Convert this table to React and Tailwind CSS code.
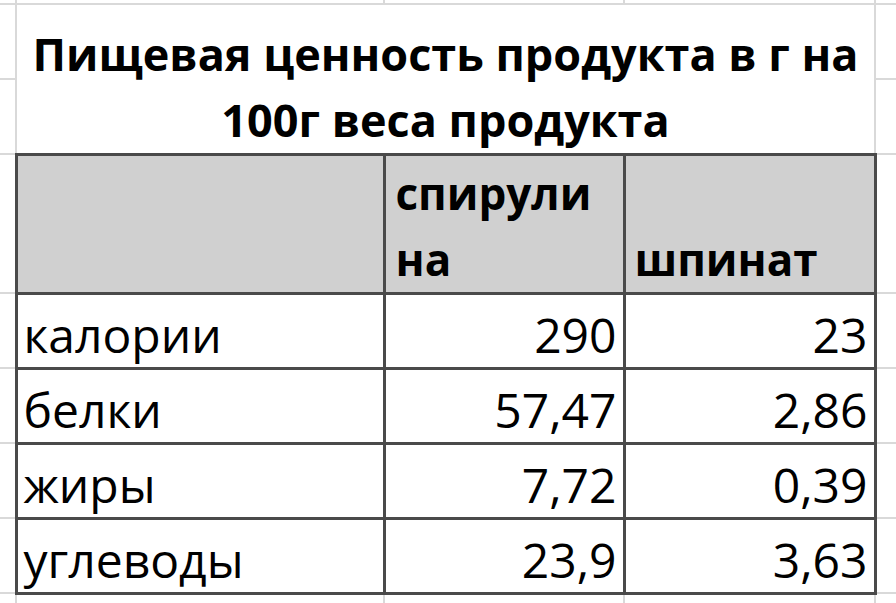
const light = 'p-0 border-2 border-[#d9d9d9]';
const dark = 'border-[3px] border-[#4a4a4a]';

const rows = [
  { label: 'калории', spirulina: '290', spinach: '23' },
  { label: 'белки', spirulina: '57,47', spinach: '2,86' },
  { label: 'жиры', spirulina: '7,72', spinach: '0,39' },
  { label: 'углеводы', spirulina: '23,9', spinach: '3,63' },
];

export default function App() {
  return (
    <div className="w-[896px] h-[603px] overflow-hidden bg-white font-['Open_Sans',sans-serif] text-black">
      <table className="table-fixed border-collapse w-[920px]">
        <colgroup>
          <col className="w-[16px]" />
          <col className="w-[368px]" />
          <col className="w-[240px]" />
          <col className="w-[251px]" />
          <col className="w-[45px]" />
        </colgroup>
        <tbody>
          <tr className="h-[4px]">
            <td className={`${light} border-t-0 border-l-0`} />
            <td className={`${light} border-t-0`} />
            <td className={`${light} border-t-0`} />
            <td className={`${light} border-t-0`} />
            <td className={`${light} border-t-0`} />
          </tr>
          <tr className="h-[75px]">
            <td className={`${light} border-l-0`} />
            <td
              colSpan={3}
              rowSpan={2}
              className={`${light} text-center align-bottom text-[45px] leading-[66px] font-bold`}
            >
              Пищевая ценность продукта в г на
              <br />
              100г веса продукта
            </td>
            <td className={light} />
          </tr>
          <tr className="h-[75px]">
            <td className={`${light} border-l-0`} />
            <td className={light} />
          </tr>
          <tr className="h-[139px]">
            <td className={`${light} border-l-0`} />
            <td className={`${dark} bg-[#d0d0d0]`} />
            <td className={`${dark} bg-[#d0d0d0] align-bottom pl-[10px] text-[44px] leading-[66px] font-bold`}>
              спирули
              <br />
              на
            </td>
            <td className={`${dark} bg-[#d0d0d0] align-bottom pl-[9px] text-[44px] leading-[66px] font-bold`}>
              шпинат
            </td>
            <td className={light} />
          </tr>
          {rows.map((row) => (
            <tr key={row.label} className="h-[75px] text-[48px] leading-[46px]">
              <td className={`${light} border-l-0`} />
              <td className={`${dark} align-bottom pl-[6px] pb-[9px]`}>{row.label}</td>
              <td className={`${dark} align-bottom text-right pr-[6px] pb-[9px]`}>{row.spirulina}</td>
              <td className={`${dark} align-bottom text-right pr-[6px] pb-[9px]`}>{row.spinach}</td>
              <td className={light} />
            </tr>
          ))}
          <tr className="h-[30px]">
            <td className={`${light} border-l-0 border-b-0`} />
            <td className={`${light} border-b-0`} />
            <td className={`${light} border-b-0`} />
            <td className={`${light} border-b-0`} />
            <td className={`${light} border-b-0`} />
          </tr>
        </tbody>
      </table>
    </div>
  );
}
